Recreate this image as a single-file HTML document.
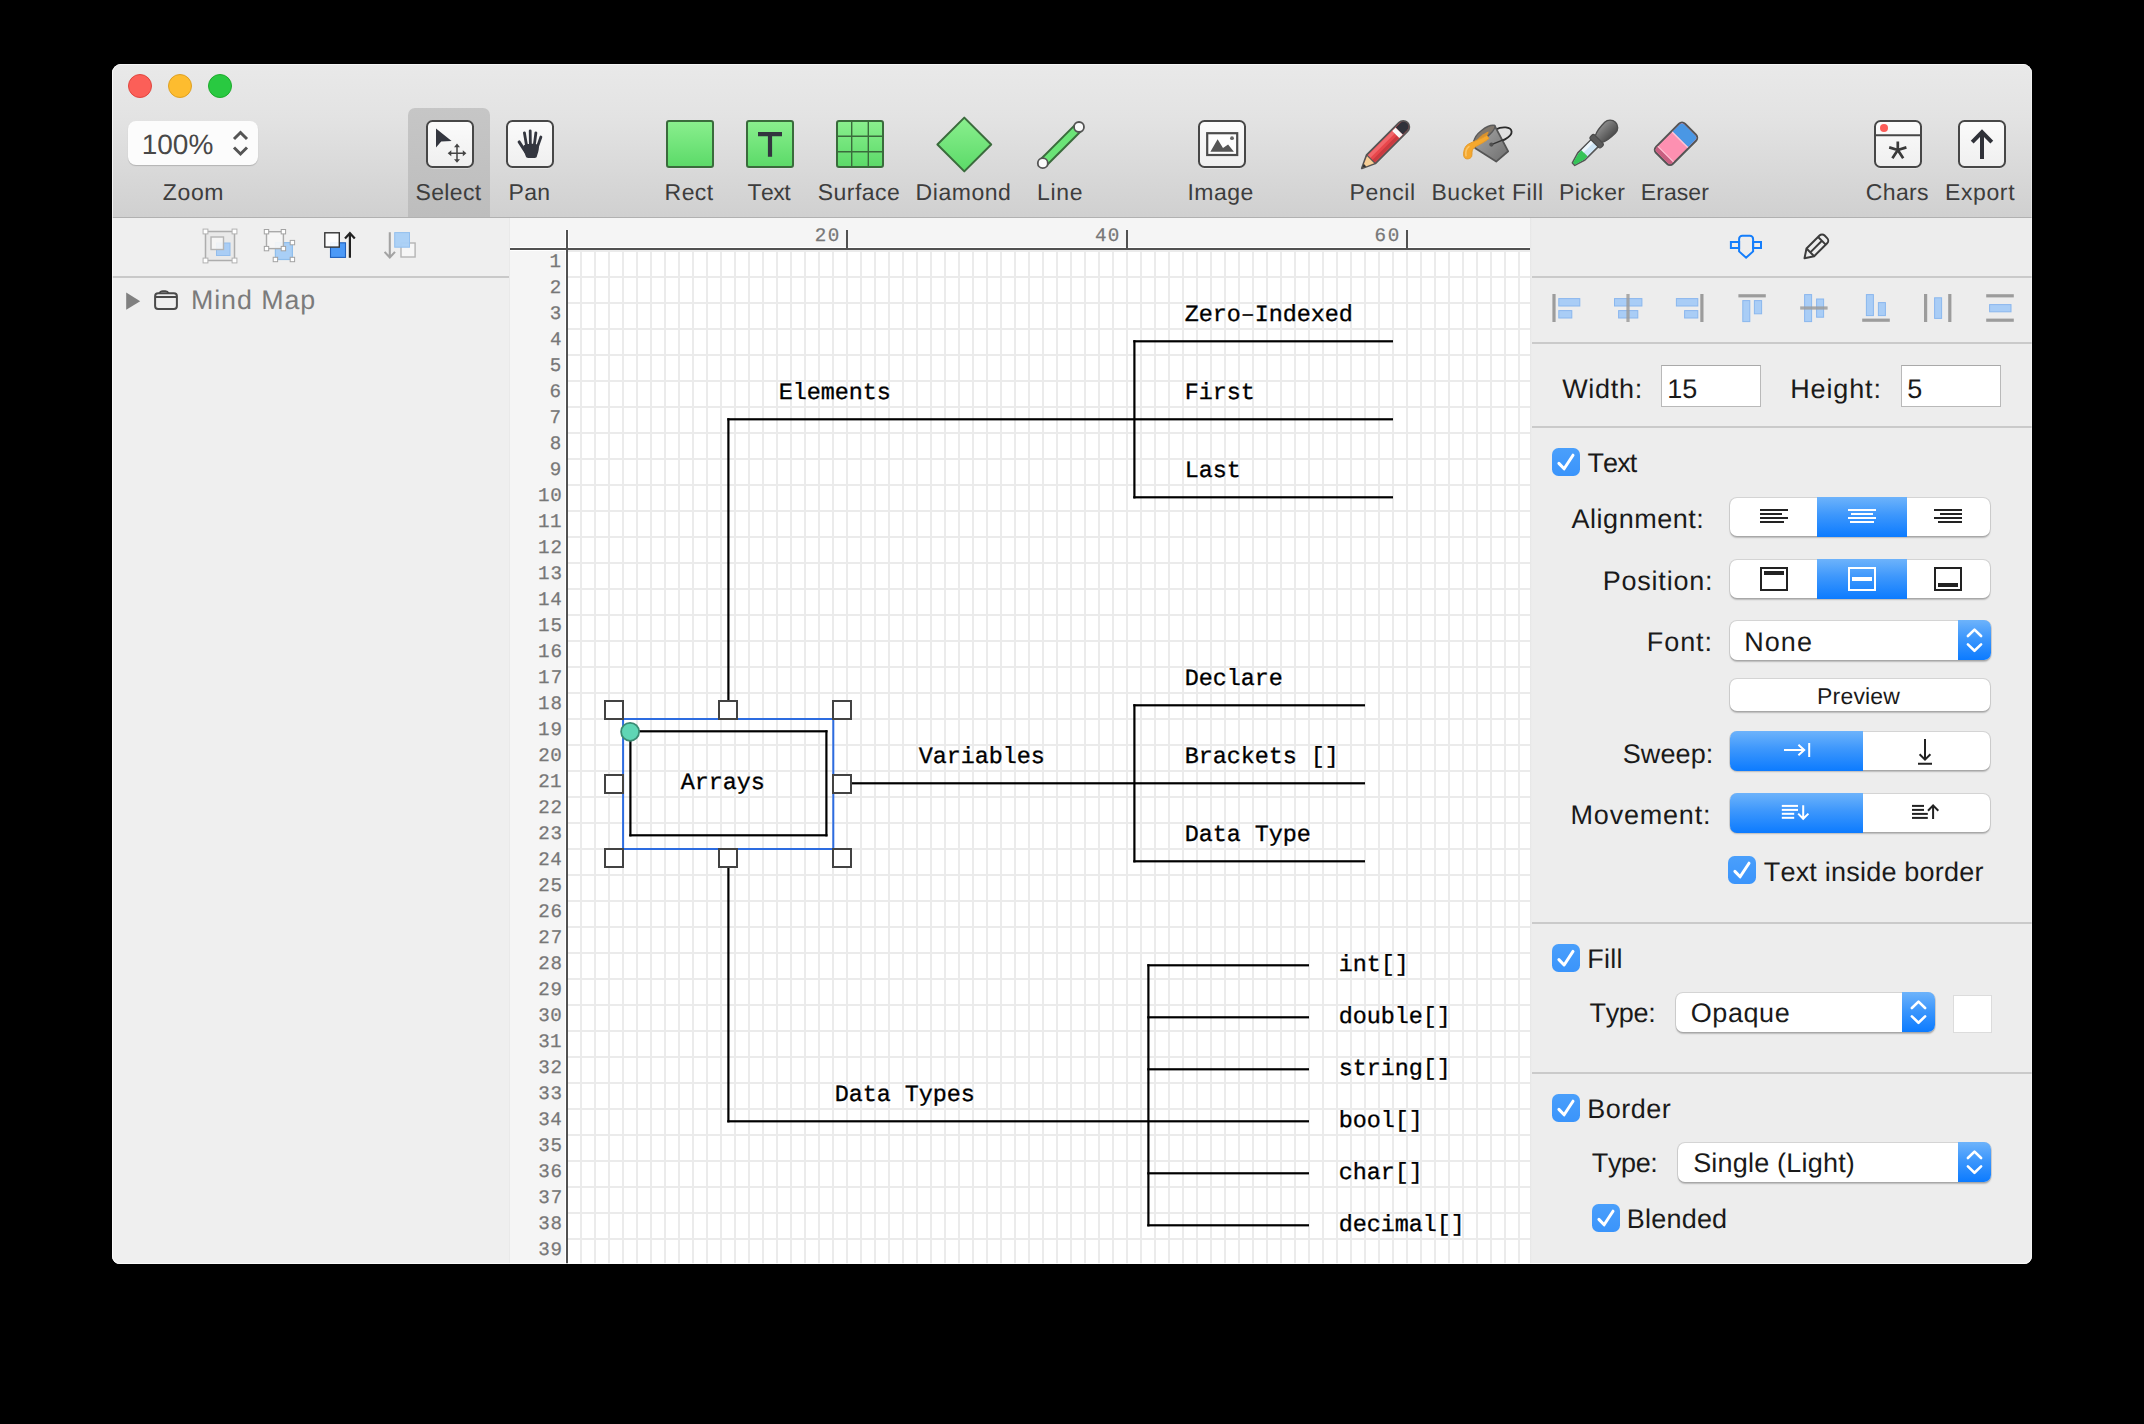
<!DOCTYPE html>
<html><head><meta charset="utf-8"><title>Monodraw</title>
<style>
html,body{margin:0;padding:0;background:#000;}
body{width:2144px;height:1424px;position:relative;overflow:hidden;font-family:"Liberation Sans",sans-serif;font-kerning:none;text-rendering:geometricPrecision;}
.a{position:absolute;box-sizing:border-box;}
.t{position:absolute;white-space:pre;font-kerning:none;}
#win{position:absolute;left:112px;top:64px;width:1920px;height:1200px;border-radius:9px 9px 8px 8px;overflow:hidden;background:#ececec;}
#pg{position:absolute;left:-112px;top:-64px;width:2144px;height:1424px;}
svg{position:absolute;left:0;top:0;}
</style></head><body>
<div id="win"><div id="pg">

<div class="a" style="left:112px;top:64px;width:1920px;height:153px;background:linear-gradient(#e9e9e9,#e3e3e3 35%,#d0d0d0);box-shadow:inset 0 1px 0 rgba(255,255,255,.55);"></div>
<div class="a" style="left:112px;top:217px;width:1920px;height:1px;background:#b1b1b1;"></div>
<div class="a" style="left:128px;top:74px;width:24px;height:24px;border-radius:50%;background:#fc5f58;border:1px solid #e0463f;"></div>
<div class="a" style="left:168px;top:74px;width:24px;height:24px;border-radius:50%;background:#fdbc2f;border:1px solid #dea123;"></div>
<div class="a" style="left:208px;top:74px;width:24px;height:24px;border-radius:50%;background:#29c941;border:1px solid #1dab2c;"></div>
<div class="a" style="left:128px;top:121px;width:130px;height:44px;border-radius:8px;background:#fcfcfc;box-shadow:0 1px 1px rgba(0,0,0,.18);"></div>
<div class="t" style="left:141.67px;top:129.15px;font-family:'Liberation Sans',sans-serif;font-size:28px;line-height:31.28px;color:#484848;letter-spacing:0.006px;">100%</div>
<svg width="2144" height="1424" viewBox="0 0 2144 1424">
<path d="M234 139 L240.5 132.5 L247 139 M234 147.5 L240.5 154 L247 147.5" fill="none" stroke="#555" stroke-width="3" stroke-linecap="butt" stroke-linejoin="miter"/>
</svg>
<div class="a" style="left:408px;top:108px;width:82px;height:109px;border-radius:7px 7px 0 0;background:linear-gradient(#c6c6c6,#bdbdbd);"></div>
<div class="t" style="left:162.77px;top:180.18px;font-family:'Liberation Sans',sans-serif;font-size:23px;line-height:25.70px;color:#3d3d3d;letter-spacing:0.652px;">Zoom</div>
<div class="t" style="left:415.46px;top:180.18px;font-family:'Liberation Sans',sans-serif;font-size:23px;line-height:25.70px;color:#3d3d3d;letter-spacing:0.358px;">Select</div>
<div class="t" style="left:508.61px;top:180.18px;font-family:'Liberation Sans',sans-serif;font-size:23px;line-height:25.70px;color:#3d3d3d;letter-spacing:0.228px;">Pan</div>
<div class="t" style="left:664.61px;top:180.18px;font-family:'Liberation Sans',sans-serif;font-size:23px;line-height:25.70px;color:#3d3d3d;letter-spacing:0.421px;">Rect</div>
<div class="t" style="left:747.48px;top:180.18px;font-family:'Liberation Sans',sans-serif;font-size:23px;line-height:25.70px;color:#3d3d3d;letter-spacing:-0.515px;">Text</div>
<div class="t" style="left:817.66px;top:180.18px;font-family:'Liberation Sans',sans-serif;font-size:23px;line-height:25.70px;color:#3d3d3d;letter-spacing:0.484px;">Surface</div>
<div class="t" style="left:915.61px;top:180.18px;font-family:'Liberation Sans',sans-serif;font-size:23px;line-height:25.70px;color:#3d3d3d;letter-spacing:0.537px;">Diamond</div>
<div class="t" style="left:1037.11px;top:180.18px;font-family:'Liberation Sans',sans-serif;font-size:23px;line-height:25.70px;color:#3d3d3d;letter-spacing:0.608px;">Line</div>
<div class="t" style="left:1187.38px;top:180.18px;font-family:'Liberation Sans',sans-serif;font-size:23px;line-height:25.70px;color:#3d3d3d;letter-spacing:0.505px;">Image</div>
<div class="t" style="left:1349.51px;top:180.18px;font-family:'Liberation Sans',sans-serif;font-size:23px;line-height:25.70px;color:#3d3d3d;letter-spacing:0.576px;">Pencil</div>
<div class="t" style="left:1431.41px;top:180.18px;font-family:'Liberation Sans',sans-serif;font-size:23px;line-height:25.70px;color:#3d3d3d;letter-spacing:0.554px;">Bucket Fill</div>
<div class="t" style="left:1559.11px;top:180.18px;font-family:'Liberation Sans',sans-serif;font-size:23px;line-height:25.70px;color:#3d3d3d;letter-spacing:0.393px;">Picker</div>
<div class="t" style="left:1640.81px;top:180.18px;font-family:'Liberation Sans',sans-serif;font-size:23px;line-height:25.70px;color:#3d3d3d;letter-spacing:0.065px;">Eraser</div>
<div class="t" style="left:1865.83px;top:180.18px;font-family:'Liberation Sans',sans-serif;font-size:23px;line-height:25.70px;color:#3d3d3d;letter-spacing:0.337px;">Chars</div>
<div class="t" style="left:1944.91px;top:180.18px;font-family:'Liberation Sans',sans-serif;font-size:23px;line-height:25.70px;color:#3d3d3d;letter-spacing:0.636px;">Export</div>
<svg width="2144" height="1424" viewBox="0 0 2144 1424">
<defs>
<linearGradient id="gg" x1="0" y1="0" x2="0" y2="1"><stop offset="0" stop-color="#8aef8e"/><stop offset="1" stop-color="#5bda68"/></linearGradient>
<linearGradient id="wb" x1="0" y1="0" x2="0" y2="1"><stop offset="0" stop-color="#fbfbfb"/><stop offset="1" stop-color="#efefef"/></linearGradient>
<linearGradient id="bk" x1="0" y1="0" x2="1" y2="1"><stop offset="0" stop-color="#a9a9a9"/><stop offset="1" stop-color="#6e6e6e"/></linearGradient>
<linearGradient id="bulb" x1="0" y1="0" x2="0" y2="1"><stop offset="0" stop-color="#8b8b8b"/><stop offset="1" stop-color="#4c4c4c"/></linearGradient>
</defs>
<rect x="427" y="122" width="46" height="47" rx="6" fill="rgba(255,255,255,.35)"/>
<rect x="427" y="121" width="46" height="46" rx="5.5" fill="url(#wb)" stroke="#474747" stroke-width="2"/>
<path d="M436 128.6 L451.6 141 L441.2 141.6 L436 147.6 Z" fill="#33363f"/>
<path d="M449.5 153.3 H464.7 M457 145.6 V161" stroke="#444" stroke-width="1.5" fill="none"/>
<path d="M447.7 153.3 l3.6 -3 v6z M466.4 153.3 l-3.6 -3 v6z M457 143.6 l-3 3.6 h6z M457 162.8 l-3 -3.6 h6z" fill="#444"/>
<rect x="507" y="122" width="46" height="47" rx="6" fill="rgba(255,255,255,.35)"/>
<rect x="507" y="121" width="46" height="46" rx="5.5" fill="url(#wb)" stroke="#474747" stroke-width="2"/>
<g stroke="#33363f" stroke-linecap="round" fill="none"><path d="M519.2 142 L526 152.5" stroke-width="3.2"/><path d="M524.4 132.8 L526.6 146" stroke-width="2.8"/><path d="M530.2 130.8 L530.4 146" stroke-width="2.8"/><path d="M535.9 132.8 L534.2 146" stroke-width="2.8"/><path d="M540.9 137 L537.4 147" stroke-width="2.8"/></g>
<path d="M523.6 146 C524 143 538.6 143 539 146 C539 151 537.5 154 536.6 157.2 C534.5 158.4 528.6 158.4 526.2 157.2 C525 154.5 523.6 150.5 523.6 146Z" fill="#33363f"/>
<rect x="667" y="122.5" width="46" height="46" rx="2.5" fill="rgba(255,255,255,.4)"/>
<rect x="667" y="121" width="46" height="46" rx="2" fill="url(#gg)" stroke="#3a6b3c" stroke-width="2"/>
<rect x="747" y="122.5" width="46" height="46" rx="2.5" fill="rgba(255,255,255,.4)"/>
<rect x="747" y="121" width="46" height="46" rx="2" fill="url(#gg)" stroke="#3a6b3c" stroke-width="2"/>
<rect x="837" y="122.5" width="46" height="46" rx="2.5" fill="rgba(255,255,255,.4)"/>
<rect x="837" y="121" width="46" height="46" rx="2" fill="url(#gg)" stroke="#3a6b3c" stroke-width="2"/>
<path d="M758 134.2 H782 M770 134.2 V156.7" stroke="#33353f" stroke-width="4.2" fill="none"/>
<path d="M851.7 121 V167 M868.3 121 V167 M837 136.3 H883 M837 151.7 H883" stroke="#3a6b3c" stroke-width="1.4" fill="none"/>
<path d="M964.3 118.5 L991.3 145.5 L964.3 172.5 L937.3 145.5 Z" fill="rgba(255,255,255,.4)"/>
<path d="M964.3 117.6 L991.2 144.5 L964.3 171.4 L937.4 144.5 Z" fill="url(#gg)" stroke="#3a6b3c" stroke-width="2" stroke-linejoin="round"/>
<path d="M1043 163 L1078.8 127.2" stroke="#3a6b3c" stroke-width="10.5"/>
<path d="M1043 163 L1078.8 127.2" stroke="#6be477" stroke-width="6.6"/>
<circle cx="1042.8" cy="163.2" r="5" fill="#fafafa" stroke="#545454" stroke-width="1.8"/>
<circle cx="1079" cy="127" r="5" fill="#fafafa" stroke="#545454" stroke-width="1.8"/>
<rect x="1199" y="122" width="46" height="47" rx="6" fill="rgba(255,255,255,.35)"/>
<rect x="1199" y="121" width="46" height="46" rx="5.5" fill="url(#wb)" stroke="#474747" stroke-width="2"/>
<rect x="1207.2" y="133.2" width="30" height="21.8" fill="#fdfdfd" stroke="#4c4c4c" stroke-width="2.2"/>
<path d="M1210.4 151.8 L1217.6 139.2 L1223 148 L1228.1 144.4 L1233.9 151.8Z" fill="#555"/><circle cx="1232" cy="138.2" r="1.9" fill="#666"/>
<g transform="translate(1361.8,168.4) rotate(-45)"><path d="M0 0 L13 -6.1 H58.6 a6.1 6.1 0 0 1 0 12.2 H13 Z" fill="#e8474c" stroke="#555" stroke-width="1.8" stroke-linejoin="round"/><path d="M1 0 L13 -5.2 V5.2 Z" fill="#f6cf96"/><path d="M0.6 0 L4.6 -1.9 V1.9 Z" fill="#333"/><rect x="13" y="-5" width="35" height="3.6" fill="#f0676b"/><rect x="13" y="1.6" width="35" height="3.4" fill="#c93a40"/><rect x="48" y="-5" width="5" height="10" fill="#f7f7f7"/><path d="M53 -5 H59 a5 5 0 0 1 0 10 H53 Z" fill="#30323a"/><path d="M13 -5.8 V5.8" stroke="#555" stroke-width="1.2"/></g>
<g><path d="M1495.5 129.6 C1502 126.2 1511 126.6 1511.6 131.6 C1512.2 137 1500 142.6 1491.6 144.6" fill="none" stroke="#2b2b2b" stroke-width="1.8"/><path d="M1474.2 140.8 L1494.6 125.6 L1508.2 151.3 L1496.2 161.6 L1475.3 148.3 Z" fill="url(#bk)" stroke="#555" stroke-width="1.8" stroke-linejoin="round"/><path d="M1474 141.6 C1474.5 134 1487.5 124.2 1494.6 125.4 C1496.6 129 1486.5 139.6 1475.6 143.6 Z" fill="#80776c" stroke="#5a5a5a" stroke-width="1.4"/><path d="M1488.8 131.6 C1483 133.6 1478 137.8 1475.4 142.6 L1486.4 137.6 Z" fill="#d9922c"/><path d="M1486.6 135.4 C1482 138.6 1472.5 141.6 1467.6 144.6 C1463.6 147.4 1462.8 155.2 1464.4 157.6 C1466 159.8 1470.6 159 1471.6 156.6 C1472.6 153.6 1471 150.6 1473.6 148.2 C1476.6 145.6 1483.6 143 1489 138.4 Z" fill="#f5a82e" stroke="#e39a2c" stroke-width="1"/><path d="M1469 146.6 C1466 148.6 1465.6 153 1466 155.6" fill="none" stroke="#fbc568" stroke-width="1.6" stroke-linecap="round"/><path d="M1491.4 144.6 L1504.4 139.4" stroke="#333" stroke-width="1.5"/><circle cx="1491.4" cy="144.6" r="2.1" fill="#4f4f4f"/></g>
<g transform="translate(1573.6,164.2) rotate(-45)"><path d="M0 -1.7 L3 -2.6 L11 -5 H31 V5 H11 L3 2.6 L0 1.7 Z" fill="#cfe6f6" stroke="#555" stroke-width="1.6" stroke-linejoin="round"/><path d="M0.6 -1.4 L3 -2.1 L11 -4.2 H15.5 V4.2 H11 L3 2.1 L0.6 1.4 Z" fill="#35c458"/><rect x="15.5" y="-4.2" width="14" height="3" fill="#eef7fd"/><rect x="29.6" y="-7.6" width="6" height="15.2" rx="2.2" fill="#5a5a5a" stroke="#4a4a4a" stroke-width="1.2"/><path d="M35.6 -4.8 C39 -6.6 44 -7.6 51.6 -7.6 a7.6 7.6 0 0 1 0 15.2 C44 7.6 39 6.6 35.6 4.8 Z" fill="url(#bulb)" stroke="#4f4f4f" stroke-width="1.4"/></g>
<g transform="translate(1676,143.8) rotate(-45)"><rect x="-20.5" y="-12" width="41" height="24" rx="4.2" fill="#fd90b1" stroke="#555" stroke-width="2"/><path d="M-19.5 -7.8 a3.3 3.3 0 0 1 3.3 -3.2 H-14.8 V11 H-16.2 a3.3 3.3 0 0 1 -3.3 -3.2Z" fill="#c75f80"/><path d="M-14.6 -11 V11" stroke="#ffc3d5" stroke-width="1.2"/><path d="M6 -11 H16.2 a3.3 3.3 0 0 1 3.3 3.2 V7.8 a3.3 3.3 0 0 1 -3.3 3.2 H6 Z" fill="#4a97e4"/><path d="M5.6 -11 V11" stroke="#ffc6d6" stroke-width="1.4"/></g>
<rect x="1875" y="122" width="46" height="47" rx="6" fill="rgba(255,255,255,.35)"/>
<rect x="1875" y="121" width="46" height="46" rx="5.5" fill="url(#wb)" stroke="#474747" stroke-width="2"/>
<path d="M1875 135.2 H1921" stroke="#474747" stroke-width="2"/><circle cx="1884" cy="128" r="4" fill="#fc5c58"/>
<path d="M1897.8 150 V141.6 M1897.8 150 L1889.2 147.4 M1897.8 150 L1906.4 147.4 M1897.8 150 L1892.4 158.2 M1897.8 150 L1903.2 158.2" stroke="#3a3a3a" stroke-width="2.7" fill="none"/>
<rect x="1959" y="122" width="46" height="47" rx="6" fill="rgba(255,255,255,.35)"/>
<rect x="1959" y="121" width="46" height="46" rx="5.5" fill="url(#wb)" stroke="#474747" stroke-width="2"/>
<path d="M1982 133 V159 M1972.2 142.2 L1982 132.2 L1991.8 142.2" stroke="#2f3138" stroke-width="4" fill="none"/>
</svg>
<div class="a" style="left:112px;top:218px;width:398px;height:1046px;background:#efefef;"></div>
<div class="a" style="left:112px;top:276px;width:397px;height:2px;background:#c9c9c9;"></div>
<div class="a" style="left:508.5px;top:218px;width:1.5px;height:1046px;background:#e9e9e9;"></div>
<div class="t" style="left:191.00px;top:286.14px;font-family:'Liberation Sans',sans-serif;font-size:26.8px;line-height:29.94px;color:#7b7b7b;letter-spacing:0.922px;">Mind Map</div>
<svg width="2144" height="1424" viewBox="0 0 2144 1424">
<rect x="205.5" y="231.5" width="29" height="29" fill="#e9e9e9" stroke="#adadad" stroke-width="1.5"/>
<rect x="216.5" y="243" width="13.5" height="12.5" fill="#a9cdf5" stroke="#93bdec" stroke-width="1"/>
<rect x="211" y="237" width="12.5" height="12.5" fill="#f6f6f6" fill-opacity=".9" stroke="#b4b4b4" stroke-width="1.4"/>
<rect x="203.1" y="229.1" width="4.8" height="4.8" fill="#fff" stroke="#b2b2b2" stroke-width="1"/>
<rect x="232.1" y="229.1" width="4.8" height="4.8" fill="#fff" stroke="#b2b2b2" stroke-width="1"/>
<rect x="203.1" y="258.1" width="4.8" height="4.8" fill="#fff" stroke="#b2b2b2" stroke-width="1"/>
<rect x="232.1" y="258.1" width="4.8" height="4.8" fill="#fff" stroke="#b2b2b2" stroke-width="1"/>
<rect x="275.4" y="242.6" width="17" height="16.9" fill="#a9cff6" stroke="#8fbeec" stroke-width="1.2"/>
<rect x="266.5" y="231.7" width="16.9" height="16.9" fill="#f6f6f6" fill-opacity=".93" stroke="#aaaaaa" stroke-width="1.4"/>
<rect x="264.3" y="229.5" width="4.4" height="4.4" fill="#fff" stroke="#a3a3a3" stroke-width="1"/>
<rect x="281.2" y="229.5" width="4.4" height="4.4" fill="#fff" stroke="#a3a3a3" stroke-width="1"/>
<rect x="264.3" y="246.4" width="4.4" height="4.4" fill="#fff" stroke="#a3a3a3" stroke-width="1"/>
<rect x="281.2" y="246.4" width="4.4" height="4.4" fill="#fff" stroke="#a3a3a3" stroke-width="1"/>
<rect x="290.2" y="240.4" width="4.4" height="4.4" fill="#fff" stroke="#a3a3a3" stroke-width="1"/>
<rect x="273.2" y="257.3" width="4.4" height="4.4" fill="#fff" stroke="#a3a3a3" stroke-width="1"/>
<rect x="290.2" y="257.3" width="4.4" height="4.4" fill="#fff" stroke="#a3a3a3" stroke-width="1"/>
<rect x="330.5" y="242.8" width="15" height="14.6" fill="#4b99f7" stroke="#1f5fbb" stroke-width="1.1"/>
<rect x="324.8" y="232.8" width="14.5" height="14.3" fill="#fdfdfd" fill-opacity=".94" stroke="#333" stroke-width="1.4"/>
<path d="M349.9 257.7 V233.6 M345 238.5 L349.9 233.2 L354.8 238.5" stroke="#222" stroke-width="2.2" fill="none"/>
<rect x="401" y="243" width="14.1" height="14" fill="#f6f6f6" stroke="#b5b5b5" stroke-width="1.4"/>
<rect x="394.7" y="232.6" width="14.8" height="14.6" fill="#a9cff6" fill-opacity=".96" stroke="#93bfee" stroke-width="1"/>
<path d="M389.8 232.2 V257 M384.6 251.9 L389.8 257.5 L395 251.9" stroke="#a3a3a3" stroke-width="2.1" fill="none"/>
<path d="M126.2 292.6 L140.2 301.2 L126.2 309.8 Z" fill="#808080"/>
<rect x="155.1" y="293.3" width="21.8" height="15.7" rx="3" fill="none" stroke="#4a4a4a" stroke-width="2"/>
<path d="M159.6 293.3 C160.2 291.4 161.4 291.2 162.8 291.2 H165.4 C166.9 291.2 167.9 291.5 168.6 293.3 M156 297 H176" fill="none" stroke="#4a4a4a" stroke-width="1.8"/>
</svg>
<div class="a" style="left:1530px;top:218px;width:502px;height:1046px;background:linear-gradient(90deg,#e6e6e6,#ededed 2px,#ededed);"></div>
<div class="a" style="left:1532px;top:276px;width:500px;height:2px;background:#cacaca;"></div>
<div class="a" style="left:1532px;top:342px;width:500px;height:2px;background:#cacaca;"></div>
<div class="a" style="left:1532px;top:426px;width:500px;height:2px;background:#cacaca;"></div>
<div class="a" style="left:1532px;top:922px;width:500px;height:2px;background:#cacaca;"></div>
<div class="a" style="left:1532px;top:1072px;width:500px;height:2px;background:#cacaca;"></div>
<div class="a" style="left:1661px;top:365px;width:100px;height:42px;background:#fff;border:1.5px solid #b9b9b9;border-top-color:#a9a9a9;"></div>
<div class="a" style="left:1901px;top:365px;width:100px;height:42px;background:#fff;border:1.5px solid #b9b9b9;border-top-color:#a9a9a9;"></div>
<div class="t" style="left:1562.18px;top:374.36px;font-family:'Liberation Sans',sans-serif;font-size:27px;line-height:30.16px;color:#1a1a1a;letter-spacing:0.713px;">Width:</div>
<div class="t" style="left:1667.34px;top:374.36px;font-family:'Liberation Sans',sans-serif;font-size:27px;line-height:30.16px;color:#1a1a1a;letter-spacing:0.000px;">15</div>
<div class="t" style="left:1790.19px;top:374.36px;font-family:'Liberation Sans',sans-serif;font-size:27px;line-height:30.16px;color:#1a1a1a;letter-spacing:0.872px;">Height:</div>
<div class="t" style="left:1907.32px;top:374.36px;font-family:'Liberation Sans',sans-serif;font-size:27px;line-height:30.16px;color:#1a1a1a;letter-spacing:0.000px;">5</div>
<div class="a" style="left:1552px;top:448px;width:28px;height:28px;border-radius:6.5px;background:linear-gradient(#4a9ffb,#3a94fb);"></div>
<div class="t" style="left:1587.49px;top:448.36px;font-family:'Liberation Sans',sans-serif;font-size:27px;line-height:30.16px;color:#1a1a1a;letter-spacing:-0.902px;">Text</div>
<div class="t" style="left:1571.55px;top:504.46px;font-family:'Liberation Sans',sans-serif;font-size:27px;line-height:30.16px;color:#1a1a1a;letter-spacing:0.517px;">Alignment:</div>
<div class="a" style="left:1729.8px;top:497.5px;width:260.10000000000014px;height:38.5px;border-radius:7px;background:#fff;box-shadow:0 0 0 1px rgba(0,0,0,.10),0 1.5px 1.5px rgba(0,0,0,.22);"></div>
<div class="a" style="left:1817px;top:497.0px;width:90px;height:39.5px;border-radius:0;background:linear-gradient(#6db3fb,#3d97fc 45%,#0c7bff);"></div>
<div class="t" style="left:1602.79px;top:566.36px;font-family:'Liberation Sans',sans-serif;font-size:27px;line-height:30.16px;color:#1a1a1a;letter-spacing:0.765px;">Position:</div>
<div class="a" style="left:1729.8px;top:559.5px;width:260.10000000000014px;height:38.5px;border-radius:7px;background:#fff;box-shadow:0 0 0 1px rgba(0,0,0,.10),0 1.5px 1.5px rgba(0,0,0,.22);"></div>
<div class="a" style="left:1817px;top:559.0px;width:90px;height:39.5px;border-radius:0;background:linear-gradient(#6db3fb,#3d97fc 45%,#0c7bff);"></div>
<div class="t" style="left:1646.79px;top:626.56px;font-family:'Liberation Sans',sans-serif;font-size:27px;line-height:30.16px;color:#1a1a1a;letter-spacing:0.938px;">Font:</div>
<div class="a" style="left:1729.8px;top:620.5px;width:261.20000000000005px;height:39px;border-radius:7px;background:#fff;box-shadow:0 0 0 1px rgba(0,0,0,.10),0 1.5px 1.5px rgba(0,0,0,.22);"></div>
<div class="a" style="left:1958px;top:620.0px;width:33px;height:40px;border-radius:0 7px 7px 0;background:linear-gradient(#6db3fb,#3d97fc 45%,#0c7bff);"></div>
<div class="t" style="left:1744.29px;top:626.56px;font-family:'Liberation Sans',sans-serif;font-size:27px;line-height:30.16px;color:#1a1a1a;letter-spacing:1.023px;">None</div>
<div class="a" style="left:1729.8px;top:678.5px;width:260.1px;height:32.5px;border-radius:7px;background:#fff;box-shadow:0 0 0 1px rgba(0,0,0,.10),0 1.5px 1.5px rgba(0,0,0,.22);"></div>
<div class="t" style="left:1817.11px;top:684.18px;font-family:'Liberation Sans',sans-serif;font-size:23px;line-height:25.70px;color:#1a1a1a;letter-spacing:0.171px;">Preview</div>
<div class="t" style="left:1622.77px;top:738.76px;font-family:'Liberation Sans',sans-serif;font-size:27px;line-height:30.16px;color:#1a1a1a;letter-spacing:0.087px;">Sweep:</div>
<div class="a" style="left:1729.8px;top:731.5px;width:260.10000000000014px;height:38.5px;border-radius:7px;background:#fff;box-shadow:0 0 0 1px rgba(0,0,0,.10),0 1.5px 1.5px rgba(0,0,0,.22);"></div>
<div class="a" style="left:1729.8px;top:731.0px;width:133.20000000000005px;height:39.5px;border-radius:7px 0 0 7px;background:linear-gradient(#6db3fb,#3d97fc 45%,#0c7bff);"></div>
<div class="t" style="left:1570.59px;top:800.16px;font-family:'Liberation Sans',sans-serif;font-size:27px;line-height:30.16px;color:#1a1a1a;letter-spacing:0.791px;">Movement:</div>
<div class="a" style="left:1729.8px;top:793.5px;width:260.10000000000014px;height:38.5px;border-radius:7px;background:#fff;box-shadow:0 0 0 1px rgba(0,0,0,.10),0 1.5px 1.5px rgba(0,0,0,.22);"></div>
<div class="a" style="left:1729.8px;top:793.0px;width:133.20000000000005px;height:39.5px;border-radius:7px 0 0 7px;background:linear-gradient(#6db3fb,#3d97fc 45%,#0c7bff);"></div>
<div class="a" style="left:1728px;top:856px;width:28px;height:28px;border-radius:6.5px;background:linear-gradient(#4a9ffb,#3a94fb);"></div>
<div class="t" style="left:1763.69px;top:856.56px;font-family:'Liberation Sans',sans-serif;font-size:27px;line-height:30.16px;color:#1a1a1a;letter-spacing:0.215px;">Text inside border</div>
<div class="a" style="left:1552px;top:944.2px;width:28px;height:28px;border-radius:6.5px;background:linear-gradient(#4a9ffb,#3a94fb);"></div>
<div class="t" style="left:1587.19px;top:943.96px;font-family:'Liberation Sans',sans-serif;font-size:27px;line-height:30.16px;color:#1a1a1a;letter-spacing:0.311px;">Fill</div>
<div class="t" style="left:1589.59px;top:998.06px;font-family:'Liberation Sans',sans-serif;font-size:27px;line-height:30.16px;color:#1a1a1a;letter-spacing:-0.364px;">Type:</div>
<div class="a" style="left:1675.8px;top:992.5px;width:259.20000000000005px;height:39px;border-radius:7px;background:#fff;box-shadow:0 0 0 1px rgba(0,0,0,.10),0 1.5px 1.5px rgba(0,0,0,.22);"></div>
<div class="a" style="left:1902px;top:992.0px;width:33px;height:40px;border-radius:0 7px 7px 0;background:linear-gradient(#6db3fb,#3d97fc 45%,#0c7bff);"></div>
<div class="t" style="left:1690.82px;top:998.06px;font-family:'Liberation Sans',sans-serif;font-size:27px;line-height:30.16px;color:#1a1a1a;letter-spacing:0.559px;">Opaque</div>
<div class="a" style="left:1953px;top:994.5px;width:38.5px;height:38.5px;background:#fff;border:1.5px solid #dcdcdc;"></div>
<div class="a" style="left:1552px;top:1094px;width:28px;height:28px;border-radius:6.5px;background:linear-gradient(#4a9ffb,#3a94fb);"></div>
<div class="t" style="left:1587.19px;top:1093.96px;font-family:'Liberation Sans',sans-serif;font-size:27px;line-height:30.16px;color:#1a1a1a;letter-spacing:0.505px;">Border</div>
<div class="t" style="left:1591.79px;top:1148.06px;font-family:'Liberation Sans',sans-serif;font-size:27px;line-height:30.16px;color:#1a1a1a;letter-spacing:-0.364px;">Type:</div>
<div class="a" style="left:1677.8px;top:1142.6px;width:313.20000000000005px;height:39px;border-radius:7px;background:#fff;box-shadow:0 0 0 1px rgba(0,0,0,.10),0 1.5px 1.5px rgba(0,0,0,.22);"></div>
<div class="a" style="left:1958px;top:1142.1px;width:33px;height:40px;border-radius:0 7px 7px 0;background:linear-gradient(#6db3fb,#3d97fc 45%,#0c7bff);"></div>
<div class="t" style="left:1693.17px;top:1148.06px;font-family:'Liberation Sans',sans-serif;font-size:27px;line-height:30.16px;color:#1a1a1a;letter-spacing:0.201px;">Single (Light)</div>
<div class="a" style="left:1592px;top:1204px;width:28px;height:28px;border-radius:6.5px;background:linear-gradient(#4a9ffb,#3a94fb);"></div>
<div class="t" style="left:1626.79px;top:1203.56px;font-family:'Liberation Sans',sans-serif;font-size:27px;line-height:30.16px;color:#1a1a1a;letter-spacing:0.211px;">Blended</div>
<svg width="2144" height="1424" viewBox="0 0 2144 1424">
<g fill="none" stroke="#157efb" stroke-width="2"><path d="M1739.1 251.4 V239 a3.2 3.2 0 0 1 3.2 -3.2 H1749.9 a3.2 3.2 0 0 1 3.2 3.2 V251.4 L1746.1 257.7 Z" stroke-linejoin="miter"/><rect x="1730.9" y="242" width="8.2" height="6"/><rect x="1753.1" y="242" width="7.9" height="6"/></g>
<g transform="translate(1804.1,258.6) rotate(-45)" fill="none" stroke="#3c3c3c" stroke-width="2" stroke-linejoin="round"><path d="M0.6 0 L8.8 -5.4 H27.2 a3.6 3.6 0 0 1 3.6 3.6 V1.8 a3.6 3.6 0 0 1 -3.6 3.6 H8.8 Z"/><path d="M8.8 -5.4 V5.4 M25.2 -5.4 V5.4 M8.8 0 H25.2"/></g>
<rect x="1552.4" y="294" width="3.2" height="28" fill="#9c9c9c"/>
<rect x="1558.8" y="298.6" width="21" height="7.4" fill="#a9cdf6" stroke="#8ab7ee" stroke-width="1"/>
<rect x="1558.8" y="310.6" width="13" height="7.4" fill="#a9cdf6" stroke="#8ab7ee" stroke-width="1"/>
<rect x="1614.5" y="298.6" width="27.4" height="7.4" fill="#a9cdf6" stroke="#8ab7ee" stroke-width="1"/>
<rect x="1618.6" y="310.6" width="19.2" height="7.4" fill="#a9cdf6" stroke="#8ab7ee" stroke-width="1"/>
<rect x="1626.4" y="294" width="3.2" height="28" fill="#9c9c9c" fill-opacity=".85"/>
<rect x="1700.3" y="294" width="3.2" height="28" fill="#9c9c9c"/>
<rect x="1676.4" y="298.6" width="21.4" height="7.4" fill="#a9cdf6" stroke="#8ab7ee" stroke-width="1"/>
<rect x="1684.6" y="310.6" width="13.2" height="7.4" fill="#a9cdf6" stroke="#8ab7ee" stroke-width="1"/>
<rect x="1738.4" y="294.2" width="27.4" height="3.2" fill="#9c9c9c"/>
<rect x="1742.8" y="300.6" width="7" height="21" fill="#a9cdf6" stroke="#8ab7ee" stroke-width="1"/>
<rect x="1754.4" y="300.6" width="7.2" height="13.2" fill="#a9cdf6" stroke="#8ab7ee" stroke-width="1"/>
<rect x="1804.6" y="294.6" width="7" height="27" fill="#a9cdf6" stroke="#8ab7ee" stroke-width="1"/>
<rect x="1816.6" y="299" width="7" height="18.2" fill="#a9cdf6" stroke="#8ab7ee" stroke-width="1"/>
<rect x="1800.2" y="306.4" width="27.4" height="3.2" fill="#9c9c9c" fill-opacity=".85"/>
<rect x="1862.2" y="318.6" width="27.6" height="3.2" fill="#9c9c9c"/>
<rect x="1866.4" y="294.6" width="7" height="21" fill="#a9cdf6" stroke="#8ab7ee" stroke-width="1"/>
<rect x="1878.4" y="302.6" width="7" height="13" fill="#a9cdf6" stroke="#8ab7ee" stroke-width="1"/>
<rect x="1924" y="294" width="3.2" height="28" fill="#9c9c9c"/>
<rect x="1948.2" y="294" width="3.2" height="28" fill="#9c9c9c"/>
<rect x="1934.6" y="297.8" width="7" height="20.6" fill="#a9cdf6" stroke="#8ab7ee" stroke-width="1"/>
<rect x="1986.2" y="294.2" width="27.6" height="3.2" fill="#9c9c9c"/>
<rect x="1986.2" y="318.6" width="27.6" height="3.2" fill="#9c9c9c"/>
<rect x="1989.6" y="304.6" width="21.4" height="7.2" fill="#a9cdf6" stroke="#8ab7ee" stroke-width="1"/>
<rect x="1760" y="509" width="28" height="2" fill="#222"/>
<rect x="1760" y="513" width="22" height="2" fill="#222"/>
<rect x="1760" y="517" width="28" height="2" fill="#222"/>
<rect x="1760" y="521" width="24" height="2" fill="#222"/>
<rect x="1848" y="509" width="28" height="2" fill="#fff"/>
<rect x="1851" y="513" width="22" height="2" fill="#fff"/>
<rect x="1848" y="517" width="28" height="2" fill="#fff"/>
<rect x="1850" y="521" width="24" height="2" fill="#fff"/>
<rect x="1934" y="509" width="28" height="2" fill="#222"/>
<rect x="1940" y="513" width="22" height="2" fill="#222"/>
<rect x="1934" y="517" width="28" height="2" fill="#222"/>
<rect x="1938" y="521" width="24" height="2" fill="#222"/>
<rect x="1761" y="568" width="26" height="22" fill="none" stroke="#222" stroke-width="2"/>
<rect x="1764" y="571" width="20" height="4" fill="#222"/>
<rect x="1849" y="568" width="26" height="22" fill="none" stroke="#fff" stroke-width="2"/>
<rect x="1852" y="577" width="20" height="4" fill="#fff"/>
<rect x="1935" y="568" width="26" height="22" fill="none" stroke="#222" stroke-width="2"/>
<rect x="1938" y="583" width="20" height="4" fill="#222"/>
<path d="M1784 750 H1804 M1798.4 744.8 L1804.2 750 L1798.4 755.2 M1809.2 743 V757" fill="none" stroke="#fff" stroke-width="2"/>
<path d="M1925 739 V759 M1919.6 754.2 L1925 759.6 L1930.4 754.2 M1918 763.8 H1932" fill="none" stroke="#222" stroke-width="2"/>
<rect x="1781.8" y="804.9" width="16.200000000000045" height="2" fill="#fff"/>
<rect x="1781.8" y="808.9" width="16.200000000000045" height="2" fill="#fff"/>
<rect x="1781.8" y="812.8" width="12.400000000000091" height="2" fill="#fff"/>
<rect x="1781.8" y="816.8" width="12.400000000000091" height="2" fill="#fff"/>
<path d="M1803.2 805.2 V818.4 M1798.2 813.6 L1803.2 818.8 L1808.4 813.6" fill="none" stroke="#fff" stroke-width="2"/>
<rect x="1912" y="804.9" width="12" height="2" fill="#222"/>
<rect x="1912" y="808.9" width="12" height="2" fill="#222"/>
<rect x="1912" y="812.9" width="15.799999999999955" height="2" fill="#222"/>
<rect x="1912" y="816.9" width="15.799999999999955" height="2" fill="#222"/>
<path d="M1933.1 819 V805.8 M1928 810.8 L1933.1 805.4 L1938.3 810.8" fill="none" stroke="#222" stroke-width="2"/>
<path d="M1967.9 636.0 L1974.5 629.6 L1981.1 636.0 M1967.9 644.4000000000001 L1974.5 650.8000000000001 L1981.1 644.4000000000001" fill="none" stroke="#fff" stroke-width="2.6" stroke-linecap="round" stroke-linejoin="round"/>
<path d="M1911.9 1008.0 L1918.5 1001.6 L1925.1 1008.0 M1911.9 1016.4000000000001 L1918.5 1022.8000000000001 L1925.1 1016.4000000000001" fill="none" stroke="#fff" stroke-width="2.6" stroke-linecap="round" stroke-linejoin="round"/>
<path d="M1967.9 1158.0 L1974.5 1151.6000000000001 L1981.1 1158.0 M1967.9 1166.4 L1974.5 1172.8 L1981.1 1166.4" fill="none" stroke="#fff" stroke-width="2.6" stroke-linecap="round" stroke-linejoin="round"/>
<path d="M1558.9 463.4 L1564.1 468.8 L1573 455.2" fill="none" stroke="#fff" stroke-width="3" stroke-linecap="round" stroke-linejoin="round"/>
<path d="M1734.9 871.4 L1740.1 876.8 L1749 863.2" fill="none" stroke="#fff" stroke-width="3" stroke-linecap="round" stroke-linejoin="round"/>
<path d="M1558.9 959.6 L1564.1 965.0 L1573 951.4000000000001" fill="none" stroke="#fff" stroke-width="3" stroke-linecap="round" stroke-linejoin="round"/>
<path d="M1558.9 1109.4 L1564.1 1114.8 L1573 1101.2" fill="none" stroke="#fff" stroke-width="3" stroke-linecap="round" stroke-linejoin="round"/>
<path d="M1598.9 1219.4 L1604.1 1224.8 L1613 1211.2" fill="none" stroke="#fff" stroke-width="3" stroke-linecap="round" stroke-linejoin="round"/>
</svg>
<div class="a" style="left:510px;top:218px;width:1020px;height:1046px;background:#f5f5f5;"></div>
<div class="a" style="left:568px;top:250px;width:962px;height:1014px;background:#fff;"></div>
<svg width="2144" height="1424" viewBox="0 0 2144 1424" shape-rendering="crispEdges">
<defs><pattern id="g" x="566" y="250" width="14" height="26" patternUnits="userSpaceOnUse"><rect x="0" y="0" width="2" height="26" fill="#ebebeb"/><rect x="0" y="0" width="14" height="2" fill="#ebebeb"/></pattern></defs>
<rect x="565" y="230" width="4" height="1034" fill="#fff"/>
<rect x="510" y="247" width="1020" height="4" fill="#fff"/>
<rect x="568" y="250" width="962" height="1014" fill="url(#g)"/>
<rect x="566" y="230" width="2" height="1034" fill="#515151"/>
<rect x="510" y="248" width="1020" height="2" fill="#515151"/>
<rect x="846" y="230" width="2" height="18" fill="#515151"/>
<rect x="1126" y="230" width="2" height="18" fill="#515151"/>
<rect x="1406" y="230" width="2" height="18" fill="#515151"/>
</svg>
<div class="t" style="left:814.65px;top:226.02px;font-family:'Liberation Mono',monospace;font-size:19.2px;line-height:21.75px;color:#777;letter-spacing:1.488px;-webkit-text-stroke:0.25px #777;">20</div>
<div class="t" style="left:1095.03px;top:226.02px;font-family:'Liberation Mono',monospace;font-size:19.2px;line-height:21.75px;color:#777;letter-spacing:1.103px;-webkit-text-stroke:0.25px #777;">40</div>
<div class="t" style="left:1374.58px;top:226.02px;font-family:'Liberation Mono',monospace;font-size:19.2px;line-height:21.75px;color:#777;letter-spacing:1.553px;-webkit-text-stroke:0.25px #777;">60</div>
<div class="t" style="left:549.61px;top:251.82px;font-family:'Liberation Mono',monospace;font-size:19.2px;line-height:21.75px;color:#777;letter-spacing:0.000px;-webkit-text-stroke:0.25px #777;">1</div>
<div class="t" style="left:549.65px;top:277.82px;font-family:'Liberation Mono',monospace;font-size:19.2px;line-height:21.75px;color:#777;letter-spacing:0.000px;-webkit-text-stroke:0.25px #777;">2</div>
<div class="t" style="left:549.80px;top:303.82px;font-family:'Liberation Mono',monospace;font-size:19.2px;line-height:21.75px;color:#777;letter-spacing:0.000px;-webkit-text-stroke:0.25px #777;">3</div>
<div class="t" style="left:550.03px;top:329.82px;font-family:'Liberation Mono',monospace;font-size:19.2px;line-height:21.75px;color:#777;letter-spacing:0.000px;-webkit-text-stroke:0.25px #777;">4</div>
<div class="t" style="left:549.80px;top:355.82px;font-family:'Liberation Mono',monospace;font-size:19.2px;line-height:21.75px;color:#777;letter-spacing:0.000px;-webkit-text-stroke:0.25px #777;">5</div>
<div class="t" style="left:549.58px;top:381.82px;font-family:'Liberation Mono',monospace;font-size:19.2px;line-height:21.75px;color:#777;letter-spacing:0.000px;-webkit-text-stroke:0.25px #777;">6</div>
<div class="t" style="left:549.52px;top:407.82px;font-family:'Liberation Mono',monospace;font-size:19.2px;line-height:21.75px;color:#777;letter-spacing:0.000px;-webkit-text-stroke:0.25px #777;">7</div>
<div class="t" style="left:549.75px;top:433.82px;font-family:'Liberation Mono',monospace;font-size:19.2px;line-height:21.75px;color:#777;letter-spacing:0.000px;-webkit-text-stroke:0.25px #777;">8</div>
<div class="t" style="left:549.68px;top:459.82px;font-family:'Liberation Mono',monospace;font-size:19.2px;line-height:21.75px;color:#777;letter-spacing:0.000px;-webkit-text-stroke:0.25px #777;">9</div>
<div class="t" style="left:538.11px;top:485.82px;font-family:'Liberation Mono',monospace;font-size:19.2px;line-height:21.75px;color:#777;letter-spacing:0.725px;-webkit-text-stroke:0.25px #777;">10</div>
<div class="t" style="left:538.11px;top:511.82px;font-family:'Liberation Mono',monospace;font-size:19.2px;line-height:21.75px;color:#777;letter-spacing:0.472px;-webkit-text-stroke:0.25px #777;">11</div>
<div class="t" style="left:538.11px;top:537.82px;font-family:'Liberation Mono',monospace;font-size:19.2px;line-height:21.75px;color:#777;letter-spacing:0.903px;-webkit-text-stroke:0.25px #777;">12</div>
<div class="t" style="left:538.11px;top:563.82px;font-family:'Liberation Mono',monospace;font-size:19.2px;line-height:21.75px;color:#777;letter-spacing:0.763px;-webkit-text-stroke:0.25px #777;">13</div>
<div class="t" style="left:538.11px;top:589.82px;font-family:'Liberation Mono',monospace;font-size:19.2px;line-height:21.75px;color:#777;letter-spacing:0.519px;-webkit-text-stroke:0.25px #777;">14</div>
<div class="t" style="left:538.11px;top:615.82px;font-family:'Liberation Mono',monospace;font-size:19.2px;line-height:21.75px;color:#777;letter-spacing:0.763px;-webkit-text-stroke:0.25px #777;">15</div>
<div class="t" style="left:538.11px;top:641.82px;font-family:'Liberation Mono',monospace;font-size:19.2px;line-height:21.75px;color:#777;letter-spacing:0.791px;-webkit-text-stroke:0.25px #777;">16</div>
<div class="t" style="left:538.11px;top:667.82px;font-family:'Liberation Mono',monospace;font-size:19.2px;line-height:21.75px;color:#777;letter-spacing:1.044px;-webkit-text-stroke:0.25px #777;">17</div>
<div class="t" style="left:538.11px;top:693.82px;font-family:'Liberation Mono',monospace;font-size:19.2px;line-height:21.75px;color:#777;letter-spacing:0.809px;-webkit-text-stroke:0.25px #777;">18</div>
<div class="t" style="left:538.11px;top:719.82px;font-family:'Liberation Mono',monospace;font-size:19.2px;line-height:21.75px;color:#777;letter-spacing:0.875px;-webkit-text-stroke:0.25px #777;">19</div>
<div class="t" style="left:538.15px;top:745.82px;font-family:'Liberation Mono',monospace;font-size:19.2px;line-height:21.75px;color:#777;letter-spacing:0.688px;-webkit-text-stroke:0.25px #777;">20</div>
<div class="t" style="left:538.15px;top:771.82px;font-family:'Liberation Mono',monospace;font-size:19.2px;line-height:21.75px;color:#777;letter-spacing:0.434px;-webkit-text-stroke:0.25px #777;">21</div>
<div class="t" style="left:538.15px;top:797.82px;font-family:'Liberation Mono',monospace;font-size:19.2px;line-height:21.75px;color:#777;letter-spacing:0.866px;-webkit-text-stroke:0.25px #777;">22</div>
<div class="t" style="left:538.15px;top:823.82px;font-family:'Liberation Mono',monospace;font-size:19.2px;line-height:21.75px;color:#777;letter-spacing:0.725px;-webkit-text-stroke:0.25px #777;">23</div>
<div class="t" style="left:538.15px;top:849.82px;font-family:'Liberation Mono',monospace;font-size:19.2px;line-height:21.75px;color:#777;letter-spacing:0.481px;-webkit-text-stroke:0.25px #777;">24</div>
<div class="t" style="left:538.15px;top:875.82px;font-family:'Liberation Mono',monospace;font-size:19.2px;line-height:21.75px;color:#777;letter-spacing:0.725px;-webkit-text-stroke:0.25px #777;">25</div>
<div class="t" style="left:538.15px;top:901.82px;font-family:'Liberation Mono',monospace;font-size:19.2px;line-height:21.75px;color:#777;letter-spacing:0.753px;-webkit-text-stroke:0.25px #777;">26</div>
<div class="t" style="left:538.15px;top:927.82px;font-family:'Liberation Mono',monospace;font-size:19.2px;line-height:21.75px;color:#777;letter-spacing:1.006px;-webkit-text-stroke:0.25px #777;">27</div>
<div class="t" style="left:538.15px;top:953.82px;font-family:'Liberation Mono',monospace;font-size:19.2px;line-height:21.75px;color:#777;letter-spacing:0.772px;-webkit-text-stroke:0.25px #777;">28</div>
<div class="t" style="left:538.15px;top:979.82px;font-family:'Liberation Mono',monospace;font-size:19.2px;line-height:21.75px;color:#777;letter-spacing:0.838px;-webkit-text-stroke:0.25px #777;">29</div>
<div class="t" style="left:538.30px;top:1005.82px;font-family:'Liberation Mono',monospace;font-size:19.2px;line-height:21.75px;color:#777;letter-spacing:0.538px;-webkit-text-stroke:0.25px #777;">30</div>
<div class="t" style="left:538.30px;top:1031.82px;font-family:'Liberation Mono',monospace;font-size:19.2px;line-height:21.75px;color:#777;letter-spacing:0.284px;-webkit-text-stroke:0.25px #777;">31</div>
<div class="t" style="left:538.30px;top:1057.82px;font-family:'Liberation Mono',monospace;font-size:19.2px;line-height:21.75px;color:#777;letter-spacing:0.716px;-webkit-text-stroke:0.25px #777;">32</div>
<div class="t" style="left:538.30px;top:1083.82px;font-family:'Liberation Mono',monospace;font-size:19.2px;line-height:21.75px;color:#777;letter-spacing:0.575px;-webkit-text-stroke:0.25px #777;">33</div>
<div class="t" style="left:538.30px;top:1109.82px;font-family:'Liberation Mono',monospace;font-size:19.2px;line-height:21.75px;color:#777;letter-spacing:0.331px;-webkit-text-stroke:0.25px #777;">34</div>
<div class="t" style="left:538.30px;top:1135.82px;font-family:'Liberation Mono',monospace;font-size:19.2px;line-height:21.75px;color:#777;letter-spacing:0.575px;-webkit-text-stroke:0.25px #777;">35</div>
<div class="t" style="left:538.30px;top:1161.82px;font-family:'Liberation Mono',monospace;font-size:19.2px;line-height:21.75px;color:#777;letter-spacing:0.603px;-webkit-text-stroke:0.25px #777;">36</div>
<div class="t" style="left:538.30px;top:1187.82px;font-family:'Liberation Mono',monospace;font-size:19.2px;line-height:21.75px;color:#777;letter-spacing:0.856px;-webkit-text-stroke:0.25px #777;">37</div>
<div class="t" style="left:538.30px;top:1213.82px;font-family:'Liberation Mono',monospace;font-size:19.2px;line-height:21.75px;color:#777;letter-spacing:0.622px;-webkit-text-stroke:0.25px #777;">38</div>
<div class="t" style="left:538.30px;top:1239.82px;font-family:'Liberation Mono',monospace;font-size:19.2px;line-height:21.75px;color:#777;letter-spacing:0.688px;-webkit-text-stroke:0.25px #777;">39</div>
<svg width="2144" height="1424" viewBox="0 0 2144 1424">
<rect x="727.30" y="418.2" width="2.2" height="282.8" fill="#000"/>
<rect x="727.3" y="418.20" width="665.7" height="2.2" fill="#000"/>
<rect x="1133.30" y="340.2" width="2.2" height="158.20000000000005" fill="#000"/>
<rect x="1133.3000000000002" y="340.20" width="259.6999999999998" height="2.2" fill="#000"/>
<rect x="1133.3000000000002" y="496.20" width="259.6999999999998" height="2.2" fill="#000"/>
<rect x="851" y="782.20" width="514" height="2.2" fill="#000"/>
<rect x="1133.30" y="704.1999999999999" width="2.2" height="158.20000000000005" fill="#000"/>
<rect x="1133.3000000000002" y="704.20" width="231.69999999999982" height="2.2" fill="#000"/>
<rect x="1133.3000000000002" y="860.20" width="231.69999999999982" height="2.2" fill="#000"/>
<rect x="727.30" y="867" width="2.2" height="255.39999999999986" fill="#000"/>
<rect x="727.3" y="1120.20" width="581.7" height="2.2" fill="#000"/>
<rect x="1147.30" y="964.1999999999999" width="2.2" height="262.19999999999993" fill="#000"/>
<rect x="1147.3000000000002" y="964.20" width="161.69999999999982" height="2.2" fill="#000"/>
<rect x="1147.3000000000002" y="1016.20" width="161.69999999999982" height="2.2" fill="#000"/>
<rect x="1147.3000000000002" y="1068.20" width="161.69999999999982" height="2.2" fill="#000"/>
<rect x="1147.3000000000002" y="1172.20" width="161.69999999999982" height="2.2" fill="#000"/>
<rect x="1147.3000000000002" y="1224.20" width="161.69999999999982" height="2.2" fill="#000"/>
<rect x="629.3" y="730.20" width="198.20000000000005" height="2.2" fill="#000"/>
<rect x="629.3" y="834.20" width="198.20000000000005" height="2.2" fill="#000"/>
<rect x="629.30" y="730.1999999999999" width="2.2" height="106.20000000000005" fill="#000"/>
<rect x="825.30" y="730.1999999999999" width="2.2" height="106.20000000000005" fill="#000"/>
<rect x="623.1" y="719" width="210.2" height="130" fill="none" stroke="#2d6ce0" stroke-width="2"/>
<rect x="605" y="701" width="18" height="18" fill="#fff" stroke="#434343" stroke-width="2"/>
<rect x="605" y="775" width="18" height="18" fill="#fff" stroke="#434343" stroke-width="2"/>
<rect x="605" y="849" width="18" height="18" fill="#fff" stroke="#434343" stroke-width="2"/>
<rect x="719" y="701" width="18" height="18" fill="#fff" stroke="#434343" stroke-width="2"/>
<rect x="719" y="849" width="18" height="18" fill="#fff" stroke="#434343" stroke-width="2"/>
<rect x="833" y="701" width="18" height="18" fill="#fff" stroke="#434343" stroke-width="2"/>
<rect x="833" y="775" width="18" height="18" fill="#fff" stroke="#434343" stroke-width="2"/>
<rect x="833" y="849" width="18" height="18" fill="#fff" stroke="#434343" stroke-width="2"/>
<circle cx="630.1" cy="731.8" r="9" fill="#5fd6b5" stroke="#3b8b73" stroke-width="1.8"/>
</svg>
<div class="t" style="left:1184.78px;top:303.02px;font-family:'Liberation Mono',monospace;font-size:23.4px;line-height:26.51px;color:#000;-webkit-text-stroke:0.3px #000;letter-spacing:-0.042px;">Zero–Indexed</div>
<div class="t" style="left:778.78px;top:381.02px;font-family:'Liberation Mono',monospace;font-size:23.4px;line-height:26.51px;color:#000;-webkit-text-stroke:0.3px #000;letter-spacing:-0.042px;">Elements</div>
<div class="t" style="left:1184.78px;top:381.02px;font-family:'Liberation Mono',monospace;font-size:23.4px;line-height:26.51px;color:#000;-webkit-text-stroke:0.3px #000;letter-spacing:-0.042px;">First</div>
<div class="t" style="left:1184.78px;top:459.02px;font-family:'Liberation Mono',monospace;font-size:23.4px;line-height:26.51px;color:#000;-webkit-text-stroke:0.3px #000;letter-spacing:-0.042px;">Last</div>
<div class="t" style="left:1184.78px;top:667.02px;font-family:'Liberation Mono',monospace;font-size:23.4px;line-height:26.51px;color:#000;-webkit-text-stroke:0.3px #000;letter-spacing:-0.042px;">Declare</div>
<div class="t" style="left:918.78px;top:745.02px;font-family:'Liberation Mono',monospace;font-size:23.4px;line-height:26.51px;color:#000;-webkit-text-stroke:0.3px #000;letter-spacing:-0.042px;">Variables</div>
<div class="t" style="left:1184.78px;top:745.02px;font-family:'Liberation Mono',monospace;font-size:23.4px;line-height:26.51px;color:#000;-webkit-text-stroke:0.3px #000;letter-spacing:-0.042px;">Brackets []</div>
<div class="t" style="left:680.78px;top:771.02px;font-family:'Liberation Mono',monospace;font-size:23.4px;line-height:26.51px;color:#000;-webkit-text-stroke:0.3px #000;letter-spacing:-0.042px;">Arrays</div>
<div class="t" style="left:1184.78px;top:823.02px;font-family:'Liberation Mono',monospace;font-size:23.4px;line-height:26.51px;color:#000;-webkit-text-stroke:0.3px #000;letter-spacing:-0.042px;">Data Type</div>
<div class="t" style="left:1338.78px;top:953.02px;font-family:'Liberation Mono',monospace;font-size:23.4px;line-height:26.51px;color:#000;-webkit-text-stroke:0.3px #000;letter-spacing:-0.042px;">int[]</div>
<div class="t" style="left:1338.78px;top:1005.02px;font-family:'Liberation Mono',monospace;font-size:23.4px;line-height:26.51px;color:#000;-webkit-text-stroke:0.3px #000;letter-spacing:-0.042px;">double[]</div>
<div class="t" style="left:1338.78px;top:1057.02px;font-family:'Liberation Mono',monospace;font-size:23.4px;line-height:26.51px;color:#000;-webkit-text-stroke:0.3px #000;letter-spacing:-0.042px;">string[]</div>
<div class="t" style="left:834.78px;top:1083.02px;font-family:'Liberation Mono',monospace;font-size:23.4px;line-height:26.51px;color:#000;-webkit-text-stroke:0.3px #000;letter-spacing:-0.042px;">Data Types</div>
<div class="t" style="left:1338.78px;top:1109.02px;font-family:'Liberation Mono',monospace;font-size:23.4px;line-height:26.51px;color:#000;-webkit-text-stroke:0.3px #000;letter-spacing:-0.042px;">bool[]</div>
<div class="t" style="left:1338.78px;top:1161.02px;font-family:'Liberation Mono',monospace;font-size:23.4px;line-height:26.51px;color:#000;-webkit-text-stroke:0.3px #000;letter-spacing:-0.042px;">char[]</div>
<div class="t" style="left:1338.78px;top:1213.02px;font-family:'Liberation Mono',monospace;font-size:23.4px;line-height:26.51px;color:#000;-webkit-text-stroke:0.3px #000;letter-spacing:-0.042px;">decimal[]</div>
<div class="a" style="left:112px;top:64px;width:1920px;height:1200px;border-radius:9px 9px 8px 8px;box-shadow:inset 1px 0 0 rgba(255,255,255,.75),inset 0 -1px 0 rgba(255,255,255,.75),inset -1px 0 0 rgba(255,255,255,.35);pointer-events:none;"></div>
</div></div></body></html>
